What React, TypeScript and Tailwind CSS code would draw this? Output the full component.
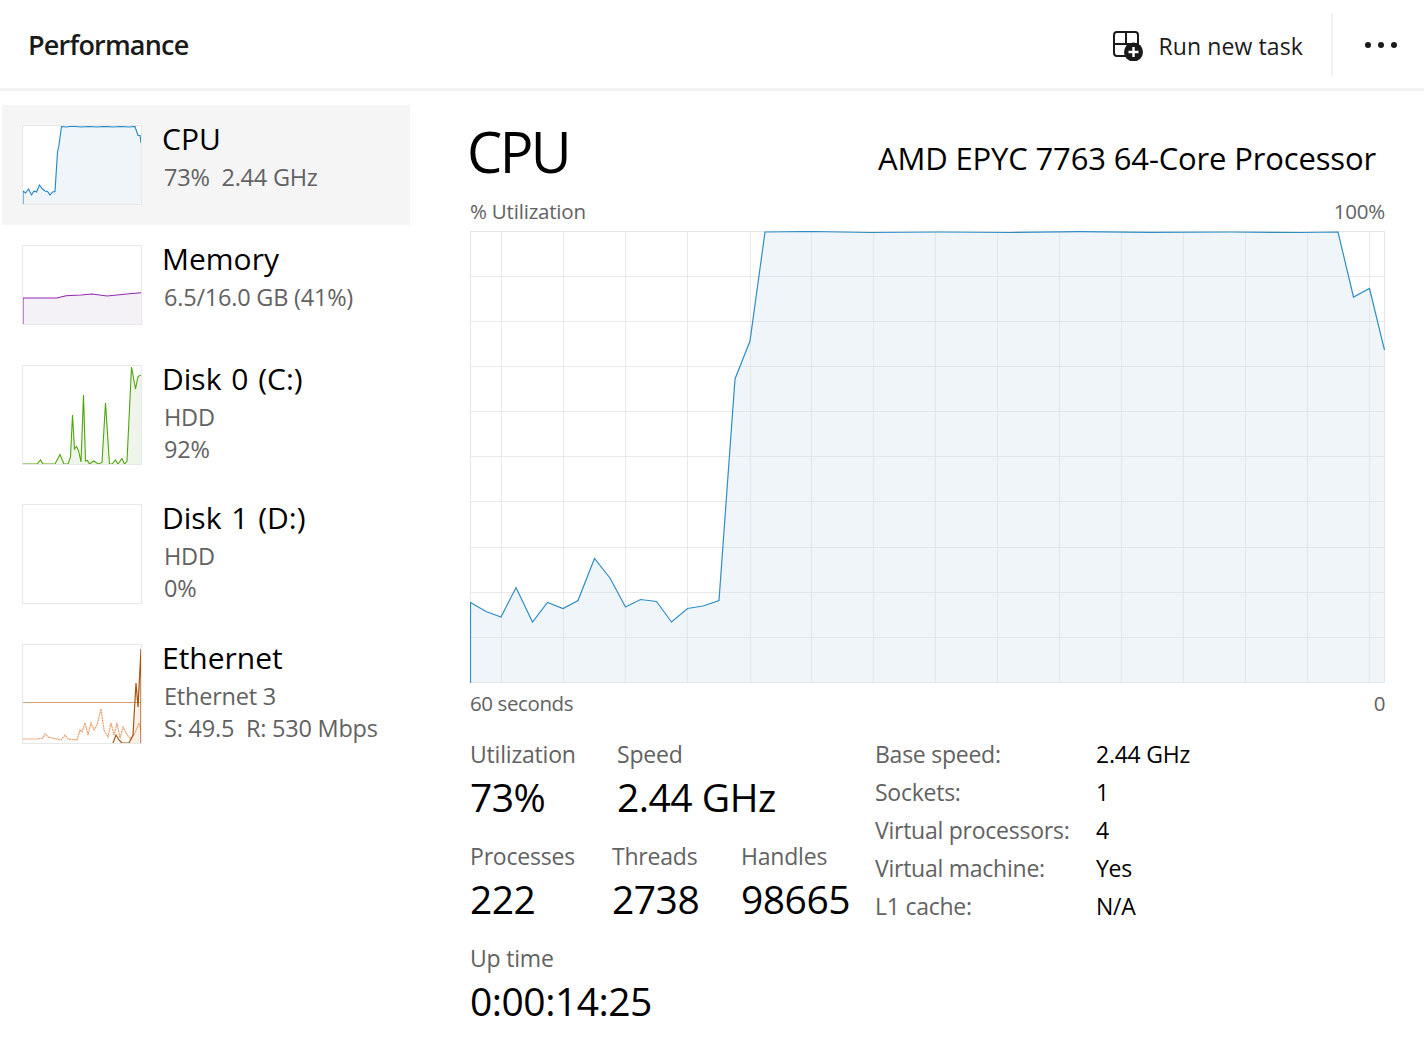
const cpuPoints =
  "0.5,602.5 16,611.5 31,617 46,587.5 62.5,622 77.5,602.5 93,608.5 108,600.5 124.5,558.5 140,578 155.5,607 170.5,599.5 186.5,601.5 201.5,622 217.5,608.5 233,606 249,600.5 265,379 280,341 295,232 340,231.5 400,232.5 470,232 540,232.5 610,231.7 680,232.3 760,232 830,232.5 868,232 883.5,297 899.5,288.5 914.5,350"
    .split(" ")
    .map((p) => {
      const [x, y] = p.split(",").map(Number);
      return `${x},${y - 231}`;
    })
    .join(" ");

const vLines = [31, 93, 155, 217, 280, 341, 403, 465, 527, 589, 651, 713, 775, 837, 899];
const hLines = [45, 90, 135, 180, 225, 270, 316, 361, 406];

function MainChart() {
  return (
    <svg viewBox="0 0 915 452" className="block h-[452px] w-[915px]">
      <polygon points={`0.5,452 ${cpuPoints} 914.5,452`} fill="#f0f5fa" />
      {hLines.map((y) => (
        <line key={y} x1="0" x2="915" y1={y + 0.5} y2={y + 0.5} stroke="#dfe1e3" strokeOpacity="0.75" />
      ))}
      {vLines.map((x) => (
        <line key={x} x1={x + 0.5} x2={x + 0.5} y1="0" y2="452" stroke="#dfe1e3" strokeOpacity="0.75" />
      ))}
      <rect x="0.5" y="0.5" width="914" height="451" fill="none" stroke="#e6e6e6" />
      <polyline points={`0.5,452 ${cpuPoints}`} fill="none" stroke="#2f8ec6" strokeWidth="1.2" />
    </svg>
  );
}

function MiniGraph({
  points,
  line,
  fill,
  tall,
  children,
}: {
  points?: string;
  line?: string;
  fill?: string;
  tall?: boolean;
  children?: React.ReactNode;
}) {
  const h = tall ? 100 : 80;
  return (
    <div className={`mt-[6px] w-[120px] shrink-0 border border-[#e8e8e8] bg-white ${tall ? "h-[100px]" : "h-[80px]"}`}>
      <svg viewBox={`0 0 118 ${h - 2}`} className="block h-full w-full">
        {points && (
          <>
            <polygon points={`0,${h - 2} ${points} 118,${h - 2}`} fill={fill} />
            <polyline points={points} fill="none" stroke={line} strokeWidth="1.1" />
          </>
        )}
        {children}
      </svg>
    </div>
  );
}

function SideItem({
  title,
  lines,
  graph,
  active,
  height,
}: {
  title: string;
  lines: string[];
  graph: React.ReactNode;
  active?: boolean;
  height: string;
}) {
  return (
    <div className={`flex gap-[21px] pl-5 pt-[14px] ${height} ${active ? "bg-[#f5f5f5]" : ""}`}>
      {graph}
      <div>
        <div className="-ml-px mb-[2px] h-10 text-[30px] leading-10 tracking-[0px] [word-spacing:2px] text-black">
          {title}
        </div>
        {lines.map((l) => (
          <div key={l} className="ml-px h-8 whitespace-pre text-[23.5px] leading-8 tracking-[-0.22px] text-[#626262]">
            {l}
          </div>
        ))}
      </div>
    </div>
  );
}

function Stat({ label, value, width }: { label: string; value: string; width: string }) {
  return (
    <div className={width}>
      <div className="h-8 text-[23px] leading-8 tracking-[-0.2px] text-[#626262]">{label}</div>
      <div className="mt-px h-[52px] text-[39px] leading-[52px] tracking-[-0.5px] text-black">{value}</div>
    </div>
  );
}

const specs = [
  ["Base speed:", "2.44 GHz"],
  ["Sockets:", "1"],
  ["Virtual processors:", "4"],
  ["Virtual machine:", "Yes"],
  ["L1 cache:", "N/A"],
];

export default function App() {
  return (
    <div className="h-[1038px] w-[1424px] overflow-hidden bg-white font-['Open_Sans',sans-serif]">
      <header className="flex h-[91px] items-center border-b-[3px] border-[#f2f2f2] pl-[28px] pr-[27px]">
        <h1 className="mt-[2px] flex-1 text-[27px] font-semibold tracking-[-0.8px] text-[#1a1a1a]">Performance</h1>
        <svg viewBox="0 0 30 30" className="mt-[4px] h-[30px] w-[30px]">
          <path
            d="M13 1v12M1 13h24M25 14V4a3 3 0 0 0-3-3H4a3 3 0 0 0-3 3v18a3 3 0 0 0 3 3h10"
            fill="none"
            stroke="#1a1a1a"
            strokeWidth="2"
          />
          <circle cx="20.5" cy="21" r="9.5" fill="#1a1a1a" />
          <path d="M20.5 16v10M15.5 21h10" stroke="#fff" strokeWidth="2.4" />
        </svg>
        <span className="ml-[16px] mt-[4px] text-[23px] tracking-[0.1px] text-[#1a1a1a]">Run new task</span>
        <div className="ml-[28px] h-[63px] w-[2px] bg-[#f0f0f0]" />
        <div className="ml-[32px] mt-[2px] flex gap-[7px]">
          <span className="h-[6px] w-[6px] rounded-full bg-[#1a1a1a]" />
          <span className="h-[6px] w-[6px] rounded-full bg-[#1a1a1a]" />
          <span className="h-[6px] w-[6px] rounded-full bg-[#1a1a1a]" />
        </div>
      </header>

      <div className="flex">
        <aside className="w-[410px] pl-[2px] pt-[14px]">
          <SideItem
            active
            height="h-[120px]"
            title="CPU"
            lines={["73%  2.44 GHz"]}
            graph={
              <MiniGraph
                line="#1f86c4"
                fill="#f0f5fa"
                points="0,78 0,65 2.5,67 5.5,63 8.5,69 11,65 13.5,66 16.5,59 19.5,63 22,65 24.5,65.5 27,69 29.5,66 32,65.5 34.5,26 36,19 38.5,0.5 43,1 50,0.3 58,1 66,0.5 74,1 82,0.4 90,1 98,0.5 106,1 112,0.5 115,9.5 117,9.5 118,17"
              />
            }
          />
          <SideItem
            height="h-[120px]"
            title="Memory"
            lines={["6.5/16.0 GB (41%)"]}
            graph={
              <MiniGraph
                line="#9528b4"
                fill="#f4f2f6"
                points="0,78 0,52 34,52 43,49.7 58,49 69,48 84,50 104,48 118,46.7"
              />
            }
          />
          <SideItem
            height="h-[139px]"
            title="Disk 0 (C:)"
            lines={["HDD", "92%"]}
            graph={
              <MiniGraph
                tall
                line="#4fa50c"
                fill="#eff5ea"
                points="0,98 14,98 17.5,94 20,98 32,98 37,88.5 41,98 45,98 47.5,91 49.5,49 51.5,83 53.5,80.5 55.5,84.5 58,96 60.5,29 62.5,95 64.5,94.5 66.5,98 70.5,95 75.5,98 79,96.5 82.5,37 86.5,98 89,98 92.5,94 95,98 99,92.5 101.5,98 104,95 108.5,1 112.5,23 115,10.5 118,9"
              />
            }
          />
          <SideItem
            height="h-[140px]"
            title="Disk 1 (D:)"
            lines={["HDD", "0%"]}
            graph={<MiniGraph tall />}
          />
          <SideItem
            height="h-[140px]"
            title="Ethernet"
            lines={["Ethernet 3", "S: 49.5  R: 530 Mbps"]}
            graph={
              <MiniGraph tall>
                <polygon points="108,98 113,70 118,5 118,98" fill="#fbf0e8" />
                <line x1="0" x2="118" y1="57.5" y2="57.5" stroke="#e0a070" strokeWidth="1" />
                <polyline
                  points="0,94 14,94 20,93 22,89 25,92 38,95 42,90 45,94 54,95 57,85 59,87 62,78 65,90 68,78 71,85 74,80 78,64 81,85 85,92 88,78 91,90 94,78 97,93 100,82 104,90 108,94 112,88 116,78 118,86"
                  fill="none"
                  stroke="#e8a070"
                  strokeWidth="1.2"
                  strokeDasharray="2 0.6"
                />
                <polyline
                  points="90,98 93,90 96,95 99,98 106,98 110,90 113,38 115,62 118,4 118,98"
                  fill="none"
                  stroke="#a9530a"
                  strokeWidth="1.2"
                />
              </MiniGraph>
            }
          />
        </aside>

        <main className="w-[1014px] pl-[60px] pr-[39px]">
          <div className="flex h-[92px] items-start justify-between">
            <div className="-ml-[3px] mt-[25px] text-[56px] font-normal leading-[70px] tracking-[-2.6px] text-black">
              CPU
            </div>
            <div className="mr-[9px] mt-[45px] text-[31px] leading-[44px] tracking-[-0.15px] text-black">
              AMD EPYC 7763 64-Core Processor
            </div>
          </div>
          <div className="mt-[12px] flex h-[32px] items-center justify-between text-[20.5px] tracking-[-0.2px] text-[#626262]">
            <span>% Utilization</span>
            <span>100%</span>
          </div>
          <div className="mt-[4px]">
            <MainChart />
          </div>
          <div className="mt-[4px] flex h-8 items-center justify-between text-[20.5px] tracking-[-0.4px] text-[#626262]">
            <span>60 seconds</span>
            <span>0</span>
          </div>

          <div className="mt-[19px] flex">
            <div className="w-[405px]">
              <div className="flex h-[102px]">
                <Stat label="Utilization" value="73%" width="w-[147px]" />
                <Stat label="Speed" value="2.44 GHz" width="w-[200px]" />
              </div>
              <div className="flex h-[102px]">
                <Stat label="Processes" value="222" width="w-[142px]" />
                <Stat label="Threads" value="2738" width="w-[129px]" />
                <Stat label="Handles" value="98665" width="w-[120px]" />
              </div>
              <Stat label="Up time" value="0:00:14:25" width="w-[300px]" />
            </div>
            <div className="-mt-[3px] grid auto-rows-[38px] grid-cols-[221px_1fr] items-center">
              {specs.map(([k, v]) => (
                <div key={k} className="contents">
                  <span className="text-[23px] leading-8 tracking-[-0.25px] text-[#626262]">{k}</span>
                  <span className="text-[23px] leading-8 tracking-[-0.25px] text-black">{v}</span>
                </div>
              ))}
            </div>
          </div>
        </main>
      </div>
    </div>
  );
}
